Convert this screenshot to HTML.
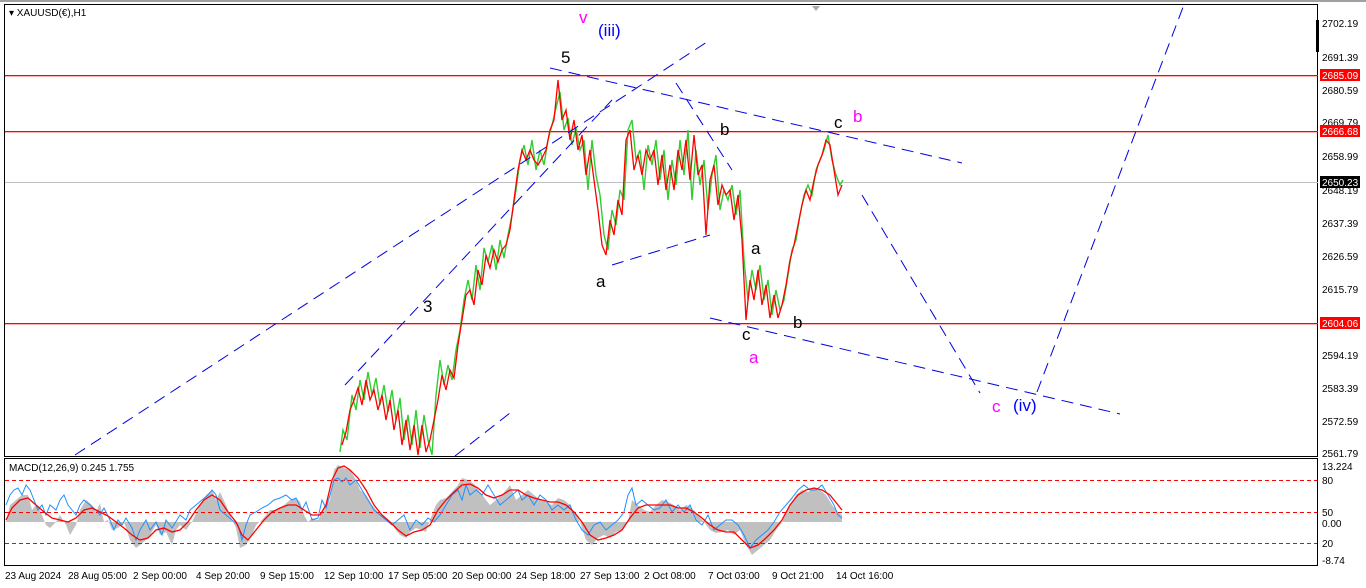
<!DOCTYPE html>
<html><head><meta charset="utf-8"><style>
html,body{margin:0;padding:0;background:#fff;width:1366px;height:588px;overflow:hidden}
svg{display:block}
text{font-family:"Liberation Sans",sans-serif}
</style></head><body>
<svg width="1366" height="588" viewBox="0 0 1366 588" xmlns="http://www.w3.org/2000/svg">
<rect x="0" y="0" width="1366" height="588" fill="#fff"/>
<rect x="0" y="0" width="1366" height="2" fill="#a0a0a0"/>
<!-- frames -->
<rect x="4.5" y="4.5" width="1313" height="452" fill="none" stroke="#000"/>
<rect x="4.5" y="458.5" width="1313" height="107" fill="none" stroke="#000"/>
<path d="M812 6 L820 6 L816 11Z" fill="#aaa"/>
<rect x="1316" y="20" width="3" height="32" fill="#000"/>
<text x="9" y="16" font-size="10">▾ XAUUSD(€),H1</text>
<!-- horizontal lines -->
<rect x="5" y="75" width="1313" height="1.3" fill="#ff0000"/>
<rect x="5" y="131" width="1313" height="1.3" fill="#ff0000"/>
<rect x="5" y="182" width="1313" height="1" fill="#c0c0c0"/>
<rect x="5" y="323" width="1313" height="1.3" fill="#ff0000"/>
<!-- price path -->
<polyline fill="none" stroke="#32cd32" stroke-width="1.4" points="340,452 343,430 347,440 352,395 356,410 360,380 364,400 368,372 372,395 376,378 380,405 384,385 388,412 392,390 396,420 400,398 404,440 408,415 412,445 416,410 420,448 424,415 428,440 432,455 436,395 440,360 444,385 448,365 452,380 456,350 460,330 464,300 468,280 472,300 476,265 480,290 484,248 488,262 492,245 496,270 500,240 504,258 508,235 512,215 516,190 520,160 524,145 528,165 532,140 536,170 540,150 544,165 548,140 552,125 556,108 560,92 564,130 568,118 572,145 576,128 580,150 584,140 588,190 592,140 596,175 600,195 604,235 608,250 612,210 616,225 620,190 624,200 628,130 632,120 636,160 640,150 644,190 648,145 652,165 656,140 660,180 664,150 668,200 672,160 676,185 680,140 684,175 688,130 692,200 696,150 700,185 704,160 708,210 712,175 716,155 720,210 724,190 728,200 732,185 736,215 740,190 744,260 748,300 752,270 756,290 760,265 764,300 768,280 772,315 776,290 780,310 784,300 788,275 792,250 796,240 800,215 804,195 808,185 812,195 816,170 820,160 824,150 828,135 832,160 836,175 840,185 843,180"/>
<polyline fill="none" stroke="#f00" stroke-width="1.3" points="342,445 346,432 350,410 354,400 358,388 362,405 366,380 370,400 374,390 378,410 382,395 386,420 390,400 394,430 398,410 402,445 406,420 410,450 414,425 418,455 422,425 426,452 430,440 438,400 442,375 446,390 450,370 454,378 458,345 462,320 466,295 470,290 474,305 478,270 482,285 486,255 490,268 494,250 498,262 502,250 506,245 510,230 514,200 518,170 522,150 526,160 530,150 534,160 538,165 542,158 546,150 550,130 554,120 558,80 562,120 566,110 570,140 574,120 578,150 582,135 586,175 590,150 594,180 598,210 602,245 606,255 610,220 614,235 618,200 622,215 626,140 630,130 634,170 638,155 642,175 646,150 650,160 654,150 658,185 662,155 666,190 670,165 674,190 678,150 682,170 686,140 690,180 694,135 698,175 702,165 706,235 710,180 714,165 718,205 722,185 726,195 730,190 734,220 738,195 742,240 746,320 750,280 754,300 758,270 762,305 766,285 770,318 774,295 778,318 782,305 786,285 790,260 794,245 798,225 802,205 806,190 810,200 814,180 818,165 822,155 826,140 830,145 834,170 838,195 842,185"/>
<!-- blue dashed lines -->
<g stroke="#0000e0" stroke-width="1" stroke-dasharray="12,7" fill="none">
<line x1="75" y1="455" x2="710" y2="40"/>
<line x1="345" y1="385" x2="612" y2="100"/>
<line x1="455" y1="456" x2="510" y2="413"/>
<line x1="550" y1="68" x2="962" y2="163"/>
<line x1="676" y1="83" x2="732" y2="170"/>
<line x1="612" y1="265" x2="710" y2="235"/>
<line x1="710" y1="318" x2="1120" y2="414"/>
<line x1="862" y1="195" x2="980" y2="393"/>
<line x1="1037" y1="392" x2="1185" y2="2"/>
</g>
<!-- wave labels -->
<g font-size="17">
<text x="561" y="63" fill="#000">5</text>
<text x="579" y="23" fill="#f0f">v</text>
<text x="598" y="36" fill="#00f">(iii)</text>
<text x="423" y="312" fill="#000">3</text>
<text x="596" y="287" fill="#000">a</text>
<text x="720" y="135" fill="#000">b</text>
<text x="834" y="128" fill="#000">c</text>
<text x="853" y="122" fill="#f0f">b</text>
<text x="751" y="254" fill="#000">a</text>
<text x="742" y="340" fill="#000">c</text>
<text x="793" y="328" fill="#000">b</text>
<text x="749" y="363" fill="#f0f">a</text>
<text x="992" y="412" fill="#f0f">c</text>
<text x="1013" y="411" fill="#00f">(iv)</text>
</g>
<!-- right axis -->
<g font-size="10" fill="#000">
<text x="1322" y="27">2702.19</text>
<text x="1322" y="61">2691.39</text>
<text x="1322" y="94">2680.59</text>
<text x="1322" y="126">2669.79</text>
<text x="1322" y="160">2658.99</text>
<text x="1322" y="194">2648.19</text>
<text x="1322" y="227">2637.39</text>
<text x="1322" y="260">2626.59</text>
<text x="1322" y="293">2615.79</text>
<text x="1322" y="359">2594.19</text>
<text x="1322" y="392">2583.39</text>
<text x="1322" y="425">2572.59</text>
<text x="1322" y="457">2561.79</text>
</g>
<rect x="1320" y="69" width="40" height="12" fill="#f00"/><text x="1322" y="79" font-size="10" fill="#fff">2685.09</text>
<rect x="1320" y="125" width="40" height="12" fill="#f00"/><text x="1322" y="135" font-size="10" fill="#fff">2666.68</text>
<rect x="1320" y="176" width="40" height="12" fill="#000"/><text x="1322" y="186" font-size="10" fill="#fff">2650.23</text>
<rect x="1320" y="317" width="40" height="12" fill="#f00"/><text x="1322" y="327" font-size="10" fill="#fff">2604.06</text>
<!-- MACD -->
<text x="9" y="471" font-size="10">MACD(12,26,9) 0.245 1.755</text>
<polygon fill="#c0c0c0" points="6,522 10,505 16,500 22,495 28,495 32,510 36,505 40,510 46,525 50,528 56,522 60,515 66,525 70,535 76,525 80,510 86,500 92,505 96,512 100,503 104,522 108,520 112,530 118,528 124,522 130,540 136,548 140,545 146,540 150,535 156,525 160,535 166,532 172,545 176,530 180,525 186,530 192,522 200,505 206,495 212,490 216,500 220,492 226,505 230,515 236,528 240,548 246,545 252,535 256,525 262,520 270,510 276,510 284,505 290,500 296,498 300,502 304,515 308,522 312,518 318,520 324,510 330,500 334,470 338,465 344,468 350,470 356,480 360,490 366,495 372,505 378,512 384,518 390,522 396,530 400,535 406,538 410,532 416,528 422,530 426,532 430,520 436,505 440,500 446,498 452,492 458,485 462,478 468,480 474,484 480,492 486,500 490,505 496,500 502,495 506,490 510,485 516,500 522,495 528,490 534,495 540,500 546,502 552,505 558,498 564,500 570,505 576,515 580,522 586,540 592,545 598,538 604,535 610,538 616,532 622,530 628,522 632,500 638,505 644,510 650,512 656,505 662,500 668,502 674,505 680,510 686,505 692,508 698,515 704,522 710,530 716,533 722,532 728,530 734,535 740,530 746,545 752,555 758,550 764,545 770,540 776,530 782,522 790,505 796,495 802,490 808,492 814,488 820,490 826,495 832,505 838,512 842,515 842,522"/>
<g stroke="#f00" stroke-dasharray="4,3" fill="none"><line x1="5" y1="480.5" x2="1317" y2="480.5"/><line x1="5" y1="512.5" x2="1317" y2="512.5"/><line x1="5" y1="543.5" x2="1317" y2="543.5"/></g>
<polyline fill="none" stroke="#1e90ff" stroke-width="1" points="6,505 10,495 14,490 18,488 22,495 26,485 30,490 34,500 38,510 42,505 46,515 50,505 56,510 60,500 64,495 68,505 72,510 76,515 80,505 84,500 90,505 96,510 100,515 104,508 110,520 114,530 118,520 122,525 126,518 132,528 136,540 140,530 146,520 150,530 156,522 162,535 166,520 172,528 180,515 186,520 190,510 196,505 202,500 208,495 212,490 216,495 220,510 226,515 232,520 238,525 242,540 246,525 250,515 256,512 262,508 268,505 274,500 280,498 286,495 292,500 296,498 302,510 306,502 312,520 318,518 322,500 326,508 330,495 334,480 338,478 342,482 346,478 350,485 356,480 362,490 368,500 374,510 380,515 386,520 392,525 398,520 404,515 410,530 416,520 422,525 428,518 434,522 440,515 446,505 452,495 458,490 462,500 466,485 470,495 476,490 482,495 488,485 494,495 500,505 506,500 512,495 518,490 522,500 528,495 534,505 540,495 546,500 552,510 558,505 564,510 570,505 576,520 582,530 588,535 594,525 600,522 606,530 612,525 618,520 624,512 628,495 632,488 636,505 642,500 648,505 654,510 660,508 666,500 672,512 678,505 684,512 690,505 696,520 702,525 708,515 714,530 720,525 726,520 732,520 738,525 744,535 750,548 756,540 762,535 768,530 774,522 780,512 786,505 792,498 798,490 804,485 810,490 816,490 822,485 828,495 834,505 838,515 842,518"/>
<polyline fill="none" stroke="#f00" stroke-width="1.3" points="6,520 12,508 20,500 28,498 36,505 44,512 52,518 60,520 68,522 76,518 84,510 92,508 100,512 108,516 116,522 124,528 132,535 140,540 148,538 156,530 164,528 172,532 180,530 188,522 196,510 204,500 212,495 220,500 228,512 236,522 242,535 248,540 256,530 264,520 272,512 280,508 288,505 296,505 304,510 312,515 320,515 326,505 332,480 338,468 344,466 350,470 358,478 366,490 374,505 382,515 390,522 398,530 406,536 414,532 422,530 430,525 438,510 446,500 454,492 462,485 470,484 478,488 486,495 494,498 502,495 510,490 518,490 526,495 534,498 542,500 550,502 558,502 566,505 574,512 582,522 590,535 598,540 606,538 614,535 622,530 630,518 638,508 646,505 654,505 662,505 670,505 678,508 686,508 694,512 702,518 710,525 718,530 726,532 734,532 742,540 750,548 758,545 766,538 774,530 782,520 790,505 798,495 806,490 814,488 822,490 830,495 838,505 842,510"/>
<g font-size="10" fill="#000">
<text x="1322" y="470">13.224</text>
<text x="1322" y="484">80</text>
<text x="1322" y="516">50</text>
<text x="1322" y="527">0.00</text>
<text x="1322" y="547">20</text>
<text x="1322" y="564">-8.74</text>
</g>
<!-- bottom axis -->
<g font-size="10" fill="#000">
<text x="5" y="579">23 Aug 2024</text>
<text x="68" y="579">28 Aug 05:00</text>
<text x="133" y="579">2 Sep 00:00</text>
<text x="196" y="579">4 Sep 20:00</text>
<text x="260" y="579">9 Sep 15:00</text>
<text x="324" y="579">12 Sep 10:00</text>
<text x="388" y="579">17 Sep 05:00</text>
<text x="452" y="579">20 Sep 00:00</text>
<text x="516" y="579">24 Sep 18:00</text>
<text x="580" y="579">27 Sep 13:00</text>
<text x="644" y="579">2 Oct 08:00</text>
<text x="708" y="579">7 Oct 03:00</text>
<text x="772" y="579">9 Oct 21:00</text>
<text x="836" y="579">14 Oct 16:00</text>
</g>
</svg>
</body></html>
